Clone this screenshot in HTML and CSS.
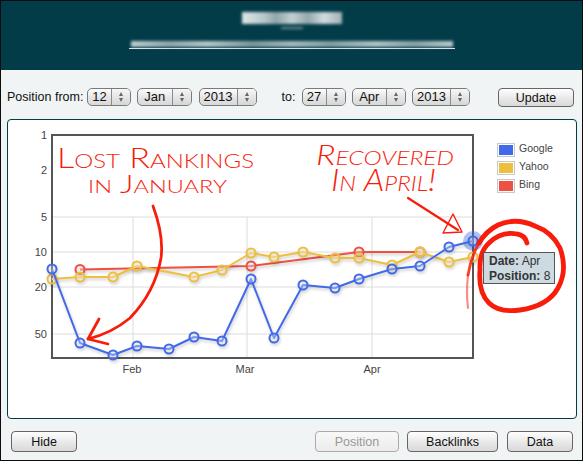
FILE: index.html
```html
<!DOCTYPE html>
<html lang="en">
<head>
<meta charset="utf-8">
<title>Position chart</title>
<link rel="stylesheet" href="styles.css">
</head>
<body>
<div class="app">
  <header class="masthead" aria-hidden="true">
    <div class="smear smear-title"></div>
    <div class="smear smear-sub"></div>
    <div class="smear smear-url"></div>
    <div class="url-line"></div>
  </header>

  <div class="toolbar">
    <span class="lbl lbl-from">Position from:</span>
    <div class="stepper w-day"><span class="val">12</span><span class="arrows"><i class="up"></i><i class="down"></i></span></div>
    <div class="stepper w-mon g6"><span class="val">Jan</span><span class="arrows"><i class="up"></i><i class="down"></i></span></div>
    <div class="stepper w-year g7"><span class="val">2013</span><span class="arrows"><i class="up"></i><i class="down"></i></span></div>
    <span class="lbl lbl-to">to:</span>
    <div class="stepper w-day"><span class="val">27</span><span class="arrows"><i class="up"></i><i class="down"></i></span></div>
    <div class="stepper w-mon g6"><span class="val">Apr</span><span class="arrows"><i class="up"></i><i class="down"></i></span></div>
    <div class="stepper w-year g6"><span class="val">2013</span><span class="arrows"><i class="up"></i><i class="down"></i></span></div>
    <button class="btn btn-update">Update</button>
  </div>

  <main class="panel">
    <svg class="chart" width="568" height="298" viewBox="8 120 568 298">
      <g class="grid">
        <path d="M53 217H472M53 252H472M53 287H472M53 334H472M133 217V357M247 217V357M372 217V357"/>
      </g>
      <rect class="plot" x="52" y="135" width="421" height="223"/>
      <g class="ticks">
        <text x="47" y="138.500">1</text>
        <text x="47" y="174">2</text>
        <text x="47" y="221">5</text>
        <text x="47" y="256">10</text>
        <text x="47" y="291">20</text>
        <text x="47" y="338">50</text>
      </g>
      <g class="months">
        <text x="132" y="373">Feb</text>
        <text x="245" y="373">Mar</text>
        <text x="372" y="373">Apr</text>
      </g>

      <g class="legend">
        <rect class="sw-box" x="497.500" y="143.500" width="17" height="13"/><rect class="c-blue" x="499" y="145" width="14" height="10"/>
        <text x="519" y="152">Google</text>
        <rect class="sw-box" x="497.500" y="161.500" width="17" height="13"/><rect class="c-yellow" x="499" y="163" width="14" height="10"/>
        <text x="519" y="170">Yahoo</text>
        <rect class="sw-box" x="497.500" y="179.500" width="17" height="13"/><rect class="c-red" x="499" y="181" width="14" height="10"/>
        <text x="519" y="188">Bing</text>
      </g>

      <circle class="halo" cx="473" cy="241" r="10"/>

      <g class="series s-red">
        <polyline points="80,269.500 251,266 359,252 420,252"/>
        <circle cx="80" cy="269.500" r="4.500"/><circle cx="251" cy="266" r="4.500"/><circle cx="359" cy="252" r="4.500"/><circle cx="420" cy="252" r="4.500"/>
      </g>
      <g class="series s-yellow">
        <polyline points="52,279 80,277 113,277 137,266 194,277 222,270 251,253 274,257 303,252 335,258 359,258 392,265 420,252 449,262 473,257"/>
        <circle cx="52" cy="279" r="4.500"/><circle cx="80" cy="277" r="4.500"/><circle cx="113" cy="277" r="4.500"/><circle cx="137" cy="266" r="4.500"/><circle cx="194" cy="277" r="4.500"/><circle cx="222" cy="270" r="4.500"/><circle cx="251" cy="253" r="4.500"/><circle cx="274" cy="257" r="4.500"/><circle cx="303" cy="252" r="4.500"/><circle cx="335" cy="258" r="4.500"/><circle cx="359" cy="258" r="4.500"/><circle cx="392" cy="265" r="4.500"/><circle cx="420" cy="252" r="4.500"/><circle cx="449" cy="262" r="4.500"/><circle cx="473" cy="257" r="4.500"/>
      </g>
      <g class="series s-blue">
        <polyline points="52,269 80,343 113,355 137,346 169,349 194,337 222,341 251,279 274,338 303,285 335,288 359,279 392,269 420,266 449,247 473,241"/>
        <circle cx="52" cy="269" r="4.500"/><circle cx="80" cy="343" r="4.500"/><circle cx="113" cy="355" r="4.500"/><circle cx="137" cy="346" r="4.500"/><circle cx="169" cy="349" r="4.500"/><circle cx="194" cy="337" r="4.500"/><circle cx="222" cy="341" r="4.500"/><circle cx="251" cy="279" r="4.500"/><circle cx="274" cy="338" r="4.500"/><circle cx="303" cy="285" r="4.500"/><circle cx="335" cy="288" r="4.500"/><circle cx="359" cy="279" r="4.500"/><circle cx="392" cy="269" r="4.500"/><circle cx="420" cy="266" r="4.500"/><circle cx="449" cy="247" r="4.500"/><circle cx="473" cy="241" r="4.500"/>
      </g>

      <g class="ink">
        <path class="w3" d="M153 206Q164 236 161 258Q155 292 130 318Q112 333 88 339"/>
        <path class="w3" d="M99 319L88 339L108 344"/>
        <path class="w2" d="M408 198L458 230"/>
        <path class="w1" d="M453 214L462 232L443 233Z"/>
        <path class="w5" d="M527 243Q525 235 517 234Q501 231 489 243Q479 252 480 270Q478 292 489 303Q499 313 520 310Q548 306 558 288Q568 270 560 248Q552 232 535 226Q516 217 498 225Q486 231 479 243"/>
        <path class="w3 fade1" d="M479 243Q471 257 468 275"/>
        <path class="w2 fade2" d="M468 275Q466 292 468 308"/>
        <text class="hand h-lost" x="57" y="168" textLength="197" lengthAdjust="spacingAndGlyphs">Lost Rankings</text>
        <text class="hand h-jan" x="88" y="193" textLength="139" lengthAdjust="spacingAndGlyphs">in January</text>
        <text class="hand h-rec" x="316" y="165" textLength="138" lengthAdjust="spacingAndGlyphs">Recovered</text>
        <text class="hand h-apr" x="331" y="191" textLength="105" lengthAdjust="spacingAndGlyphs">In April!</text>
      </g>
    </svg>
    <div class="tooltip"><b>Date:</b> Apr<br><b>Position:</b> 8</div>
  </main>

  <footer class="footer">
    <button class="btn btn-hide">Hide</button>
    <button class="btn btn-pos" disabled>Position</button>
    <button class="btn btn-back">Backlinks</button>
    <button class="btn btn-data">Data</button>
  </footer>
</div>
</body>
</html>
```
FILE: styles.css
```css
* { box-sizing: border-box; }
html, body { margin: 0; padding: 0; }
body { width: 583px; height: 461px; overflow: hidden; font-family: "Liberation Sans", Arial, sans-serif; font-size: 12.5px; color: #111; }

.app { width: 583px; height: 461px; border: 1px solid #0c0c0c; background: #f0f4f5; display: flex; flex-direction: column; }

/* blurred masthead */
.masthead { height: 69px; flex: none; background: #033c49; display: flex; flex-direction: column; align-items: center; overflow: hidden; }
.smear { filter: blur(1.4px); }
.smear-title { width: 100px; height: 12px; margin-top: 11px; margin-right: -1px; background: linear-gradient(90deg, #dfe7e8, #b8c8ca 22%, #8fa6aa 34%, #c4d0d2 50%, #93a9ad 66%, #d2dcde 82%, #9fb3b6); }
.smear-sub { width: 22px; height: 2px; margin-top: 3px; background: #6f8f95; }
.smear-url { width: 322px; height: 6px; margin-top: 12px; background: linear-gradient(90deg, #c2cfd1, #93a8ac 12%, #b9c7c9 24%, #7d979c 38%, #a8babd 50%, #84a0a4 62%, #b4c4c6 76%, #8ba3a7 88%, #bccacc); }
.url-line { width: 326px; height: 1px; margin-top: 1px; background: #dfe8ea; }

/* date toolbar */
.toolbar { height: 49px; flex: none; padding: 18px 8px 0 6px; display: flex; align-items: flex-start; }
.lbl { line-height: 18px; white-space: nowrap; }
.lbl-from { width: 80px; }
.lbl-to { margin-left: 25px; width: 20px; }
.stepper { height: 18px; display: flex; border: 1px solid #7a7a7a; border-radius: 5px; background: linear-gradient(#fdfdfd, #e4e4e4 55%, #d8d8d8); overflow: hidden; font-size: 13px; }
.w-day { width: 44px; }
.w-mon { width: 54.5px; }
.w-year { width: 58px; }
.g6 { margin-left: 6px; }
.g7 { margin-left: 7px; }
.val { flex: 1; text-align: center; line-height: 16px; border-right: 1px solid #8a8a8a; }
.arrows { width: 18px; flex: none; display: flex; flex-direction: column; align-items: center; justify-content: center; gap: 2px; background: linear-gradient(#f6f6f6, #d6d6d6); }
.arrows i { display: block; width: 0; height: 0; border-left: 2.5px solid transparent; border-right: 2.5px solid transparent; }
.arrows .up { border-bottom: 4px solid #666; }
.arrows .down { border-top: 4px solid #666; }

.btn { height: 21px; padding: 0; font: inherit; color: #111; border: 1px solid #666; border-radius: 4px; background: linear-gradient(#fefefe, #e8e8e8 55%, #d9d9d9); }
.btn-update { margin-left: auto; width: 76px; height: 19px; }

/* chart panel */
.panel { position: relative; height: 300px; flex: none; margin: 0 5px 0 6px; background: #fff; border: 1px solid #033c49; border-radius: 4px; }
.chart { display: block; }
.grid path { fill: none; stroke: #dcdcdc; stroke-width: 1; }
.plot { fill: none; stroke: #555; stroke-width: 2; }
.ticks text { font-size: 11px; fill: #444; text-anchor: end; }
.months text { font-size: 11px; fill: #444; text-anchor: middle; }
.legend text { font-size: 10.5px; fill: #444; }
.sw-box { fill: #fff; stroke: #c8c8c8; }
.c-blue { fill: #4169e8; }
.c-yellow { fill: #edbf3f; }
.c-red { fill: #ee5041; }
.halo { fill: #4169e8; opacity: .42; }

.series { filter: drop-shadow(1px 2px 1.5px rgba(0,0,0,.2)); }
.series polyline { fill: none; stroke-width: 2; stroke-linejoin: round; }
.series circle { stroke-width: 2; fill: rgba(255,255,255,.3); }
.s-blue polyline, .s-blue circle { stroke: #4169e8; }
.s-yellow polyline, .s-yellow circle { stroke: #edbf3f; }
.s-red polyline, .s-red circle { stroke: #ee5041; }

.ink path { fill: none; stroke: #f81d0b; stroke-linecap: round; stroke-linejoin: round; }
.w1 { stroke-width: 1.4; }
.w2 { stroke-width: 2.2; }
.w3 { stroke-width: 2.8; }
.w5 { stroke-width: 4.8; }
.fade1 { opacity: .85; }
.fade2 { opacity: .5; }
.hand { font-family: "Lato", sans-serif; font-variant: small-caps; fill: #f81d0b; font-weight: 300; }
.h-lost { font-size: 27px; }
.h-jan { font-size: 25px; }
.h-rec { font-size: 28px; font-style: italic; }
.h-apr { font-size: 31px; font-style: italic; }

.tooltip { position: absolute; left: 475px; top: 132px; width: 72px; height: 32px; padding: 1px 0 0 5px; background: #cddae2; border: 1px solid #555; font-size: 12px; line-height: 14.5px; color: #333; white-space: nowrap; }

/* bottom buttons */
.footer { flex: 1; padding: 12px 9px 0 10px; display: flex; align-items: flex-start; }
.btn-hide { width: 66px; margin-right: auto; }
.btn-pos { width: 84px; color: #999; border-color: #aaa; background: linear-gradient(#f8f8f8, #ececec); }
.btn-back { width: 91px; margin-left: 8px; }
.btn-data { width: 66px; margin-left: 9px; }
```
